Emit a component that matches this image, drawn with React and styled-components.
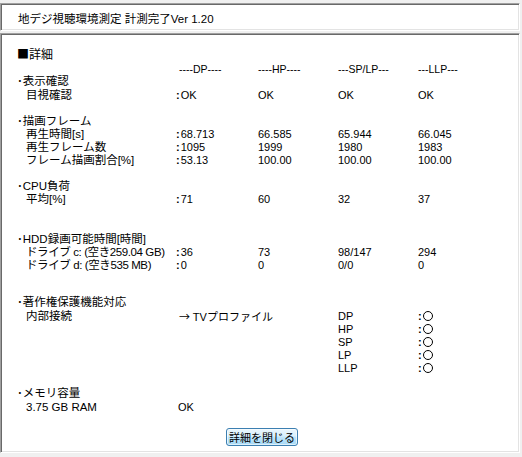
import React from "react";
import styled, { createGlobalStyle } from "styled-components";

const Global = createGlobalStyle`
  html, body {
    margin: 0;
    padding: 0;
    background: #f0f0f0;
  }
  body {
    font-family: "Liberation Sans", "Noto Sans CJK JP", sans-serif;
    font-size: 11px;
    color: #000;
  }
`;

const Window = styled.div`
  width: 522px;
  height: 457px;
  box-sizing: border-box;
  padding: 3px 2px 4px 0;
  display: flex;
  flex-direction: column;
  gap: 2px;
`;

const Sunken = styled.div`
  box-sizing: border-box;
  background: #fff;
  border: 1px solid;
  border-color: #a0a0a0 #fff #fff #a0a0a0;
  box-shadow: inset 1px 1px #696969, inset -1px -1px #e3e3e3;
`;

const TitleBar = styled(Sunken)`
  height: 28px;
  display: flex;
  align-items: center;
  padding: 1px 0 0 17px;
  font-size: 11.5px;
  white-space: nowrap;
`;

const Body = styled(Sunken)`
  flex: 1;
  padding: 13px 0 0 16px;
  display: flex;
  flex-direction: column;
`;

const Heading = styled.div`
  line-height: 13px;
  height: 13px;
  font-size: 12px;
`;

const Cjk = styled.span`
  font-family: "Noto Sans CJK JP", sans-serif;
`;

const Row = styled.div`
  display: grid;
  grid-template-columns: 159px 82px 80px 80px 1fr;
  line-height: ${(p) => p.$h || 13}px;
  height: ${(p) => p.$h || 13}px;
  margin-top: ${(p) => p.$gap || 0}px;
  white-space: nowrap;
`;

const Cell = styled.div`
  padding-left: ${(p) => p.$pad || 0}px;
  font-size: ${(p) => (p.$small ? 10.5 : 11)}px;
`;

const Label = styled.div`
  padding-left: 9px;
  font-size: 11.5px;
  letter-spacing: ${(p) => (p.$tight ? -0.4 : 0)}px;
`;

const SectionTitle = styled.div`
  line-height: 13px;
  height: 13px;
  font-size: 11.5px;
  margin-top: ${(p) => p.$gap || 0}px;
  white-space: nowrap;
`;

const Colon = styled.span`
  font-weight: bold;
  margin-right: 1px;
`;

const Circle = styled.span`
  display: inline-block;
  width: 10px;
  height: 10px;
  box-sizing: border-box;
  border: 1px solid #000;
  border-radius: 50%;
  vertical-align: -1px;
`;

const Footer = styled.div`
  display: flex;
  justify-content: center;
  margin-top: 14px;
  padding-right: 12px;
`;

const Button = styled.button`
  width: 72px;
  height: 18px;
  padding: 0;
  white-space: nowrap;
  font-family: "Noto Sans CJK JP", sans-serif;
  font-size: 11px;
  line-height: 14px;
  color: #000;
  border: 1px solid #3c7fb1;
  border-radius: 3px;
  background: linear-gradient(#eaf6fd 0%, #d9f0fc 45%, #bee6fd 50%, #a7d9f5 100%);
  box-shadow: inset 0 0 0 1px rgba(255, 255, 255, 0.6);
`;

const V = ({ children }) => (
  <>
    <Colon>:</Colon>
    {children}
  </>
);

const headers = ["----DP----", "----HP----", "---SP/LP---", "---LLP---"];

const frames = [
  ["再生時間[s]", "68.713", "66.585", "65.944", "66.045"],
  ["再生フレーム数", "1095", "1999", "1980", "1983"],
  ["フレーム描画割合[%]", "53.13", "100.00", "100.00", "100.00"],
];

const drives = [
  ["ドライブ c: (空き259.04 GB)", "36", "73", "98/147", "294"],
  ["ドライブ d: (空き535 MB)", "0", "0", "0/0", "0"],
];

const profiles = ["HP", "SP", "LP", "LLP"];

const DataRow = ({ r, tight }) => (
  <Row>
    <Label $tight={tight}>{r[0]}</Label>
    <Cell>
      <V>{r[1]}</V>
    </Cell>
    <Cell>{r[2]}</Cell>
    <Cell>{r[3]}</Cell>
    <Cell>{r[4]}</Cell>
  </Row>
);

export default function App() {
  return (
    <>
      <Global />
      <Window>
        <TitleBar>地デジ視聴環境測定 計測完了Ver 1.20</TitleBar>
        <Body>
          <Heading>
            <Cjk>■</Cjk>詳細
          </Heading>
          <Row $h={11} $gap={4}>
            <div />
            {headers.map((c, i) => (
              <Cell key={c} $small $pad={i === 0 ? 3 : 0}>
                {c}
              </Cell>
            ))}
          </Row>

          <SectionTitle>･表示確認</SectionTitle>
          <Row $gap={1}>
            <Label>目視確認</Label>
            <Cell>
              <V>OK</V>
            </Cell>
            <Cell>OK</Cell>
            <Cell>OK</Cell>
            <Cell>OK</Cell>
          </Row>

          <SectionTitle $gap={13}>･描画フレーム</SectionTitle>
          {frames.map((r) => (
            <DataRow key={r[0]} r={r} />
          ))}

          <SectionTitle $gap={13}>･CPU負荷</SectionTitle>
          <DataRow r={["平均[%]", "71", "60", "32", "37"]} />

          <SectionTitle $gap={27}>･HDD録画可能時間[時間]</SectionTitle>
          {drives.map((r) => (
            <DataRow key={r[0]} r={r} tight />
          ))}

          <SectionTitle $gap={24}>･著作権保護機能対応</SectionTitle>
          <Row $gap={1}>
            <Label>内部接続</Label>
            <Cell $pad={3}>
              <Cjk>→</Cjk> TVプロファイル
            </Cell>
            <div />
            <Cell>DP</Cell>
            <Cell>
              <Colon>:</Colon>
              <Circle />
            </Cell>
          </Row>
          {profiles.map((p) => (
            <Row key={p}>
              <div />
              <div />
              <div />
              <Cell>{p}</Cell>
              <Cell>
                <Colon>:</Colon>
                <Circle />
              </Cell>
            </Row>
          ))}

          <SectionTitle $gap={12}>･メモリ容量</SectionTitle>
          <Row $gap={1}>
            <Label>3.75 GB RAM</Label>
            <Cell $pad={2}>OK</Cell>
          </Row>

          <Footer>
            <Button>詳細を閉じる</Button>
          </Footer>
        </Body>
      </Window>
    </>
  );
}
